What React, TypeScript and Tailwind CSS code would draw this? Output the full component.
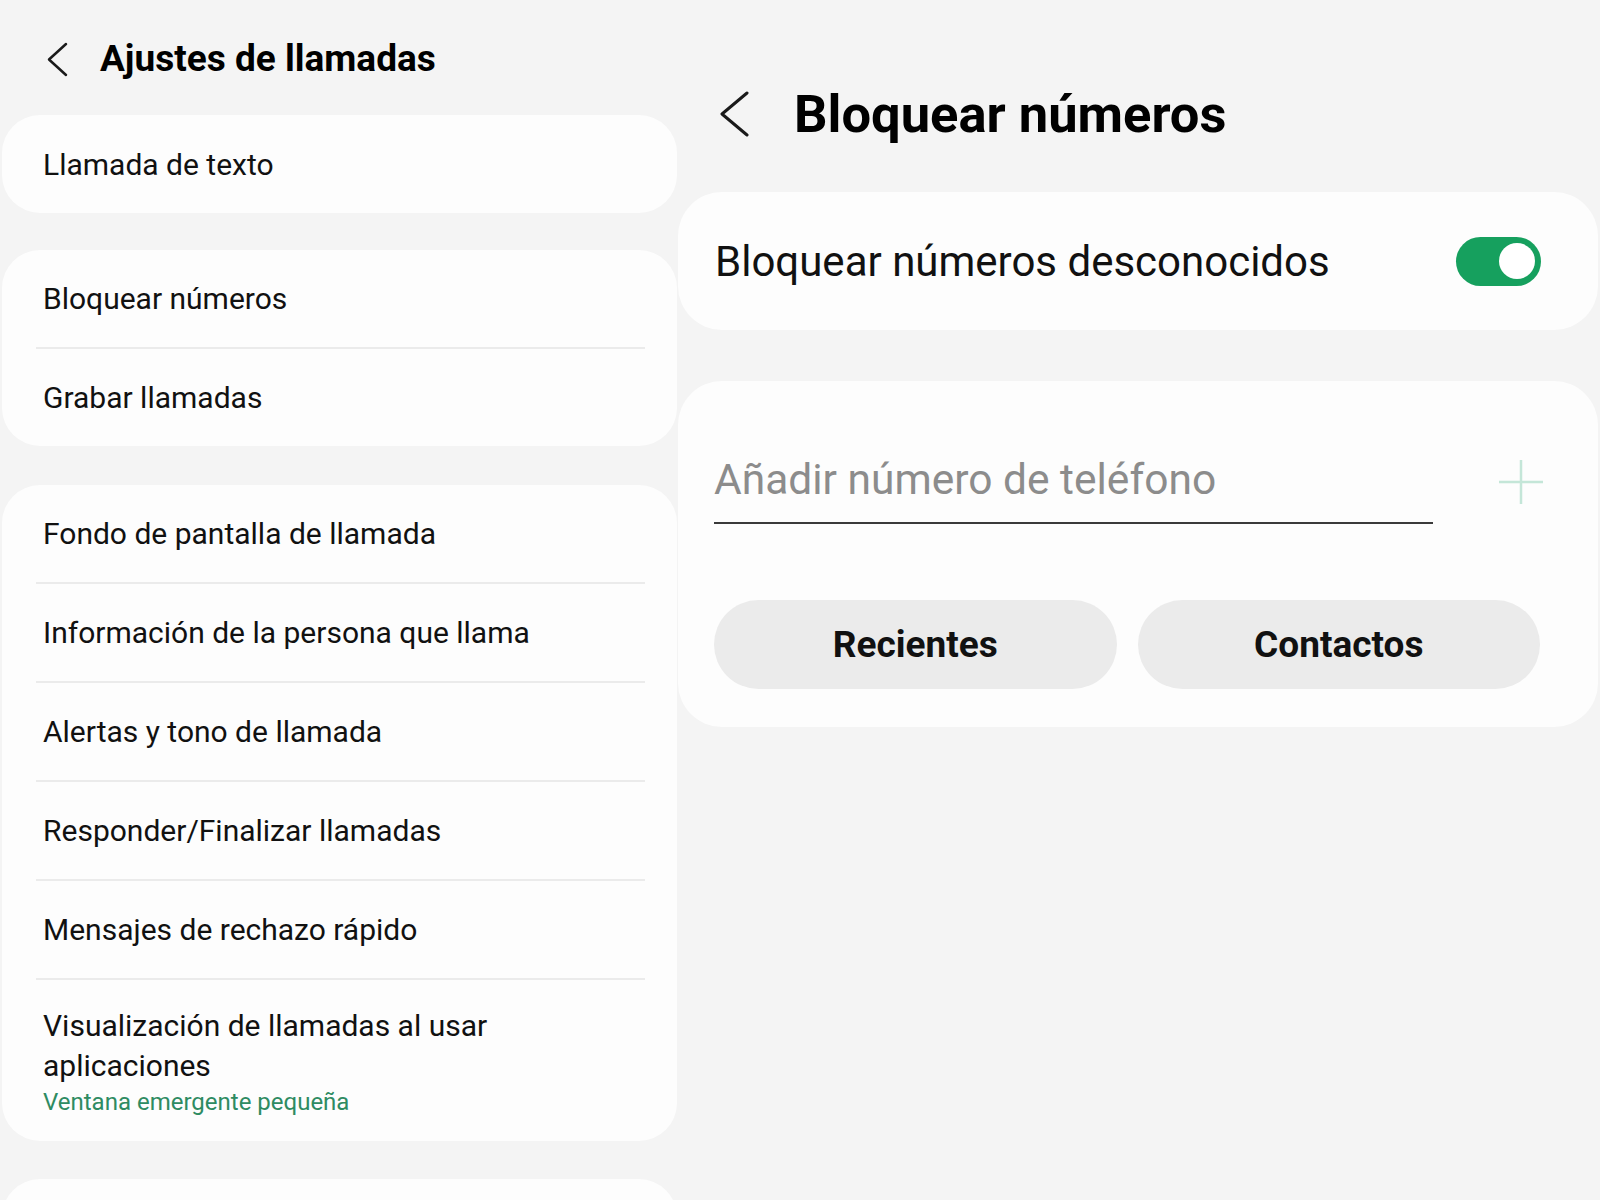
import React from 'react';

const font = { fontFamily: 'Roboto, "Noto Sans", sans-serif' };

function Chevron({ w, h, stroke }: { w: number; h: number; stroke: number }) {
  return (
    <svg width={w} height={h} viewBox={`0 0 ${w} ${h}`} fill="none">
      <polyline
        points={`${w - 2},2 3,${h / 2} ${w - 2},${h - 2}`}
        stroke="#1a1a1a"
        strokeWidth={stroke}
        strokeLinecap="round"
        strokeLinejoin="round"
      />
    </svg>
  );
}

function Divider() {
  return <div className="h-[2px] ml-[34px] mr-[32px] bg-[#ebebeb]" />;
}

function Row({ label }: { label: string }) {
  return (
    <div className="h-[97px] flex items-center pl-[41px] text-[30px] text-[#111]">{label}</div>
  );
}

const group3 = [
  'Fondo de pantalla de llamada',
  'Información de la persona que llama',
  'Alertas y tono de llamada',
  'Responder/Finalizar llamadas',
  'Mensajes de rechazo rápido',
];

export default function App() {
  return (
    <div className="w-[1600px] h-[1200px] overflow-hidden bg-[#f4f4f4] flex" style={font}>
      {/* left: Ajustes de llamadas */}
      <div className="w-[678px] shrink-0 pl-[2px] pr-[1px]">
        <div className="h-[115px] pt-[37px]">
          <div className="h-[44px] flex items-center">
            <div className="w-[98px] pl-[44px] flex items-center">
              <Chevron w={22} h={35} stroke={2.5} />
            </div>
            <h1 className="text-[37px] leading-[44px] font-bold text-black">Ajustes de llamadas</h1>
          </div>
        </div>

        <div className="rounded-[38px] bg-[#fdfdfd]">
          <div className="h-[98px] flex items-center pl-[41px] text-[30px] text-[#111]">Llamada de texto</div>
        </div>

        <div className="mt-[37px] rounded-[38px] bg-[#fdfdfd]">
          <Row label="Bloquear números" />
          <Divider />
          <Row label="Grabar llamadas" />
        </div>

        <div className="mt-[39px] rounded-[38px] bg-[#fdfdfd]">
          {group3.map((label) => (
            <React.Fragment key={label}>
              <Row label={label} />
              <Divider />
            </React.Fragment>
          ))}
          <div className="pl-[41px] pt-[26px] pb-[23px]">
            <div className="max-w-[560px] text-[30px] leading-[40px] text-[#111]">
              Visualización de llamadas al usar aplicaciones
            </div>
            <div className="text-[24px] leading-[32px] text-[#2e8b62]">Ventana emergente pequeña</div>
          </div>
        </div>

        <div className="mt-[38px] h-[100px] rounded-[38px] bg-[#fdfdfd]" />
      </div>

      {/* right: Bloquear números */}
      <div className="flex-1 pr-[2px]">
        <div className="h-[192px] pt-[84px]">
          <div className="h-[60px] flex items-center">
            <div className="w-[116px] pl-[41px] flex items-center">
              <Chevron w={30} h={46} stroke={3} />
            </div>
            <h2 className="text-[52.5px] leading-[60px] font-bold text-black">Bloquear números</h2>
          </div>
        </div>

        <div className="h-[138px] rounded-[44px] bg-[#fdfdfd] flex items-center pl-[37px] pr-[57px]">
          <span className="text-[42px] text-[#111]">Bloquear números desconocidos</span>
          <div className="ml-auto relative w-[85px] h-[49px] rounded-full bg-[#16a05e]">
            <div className="absolute right-[6px] top-[6.5px] w-[36px] h-[36px] rounded-full bg-white" />
          </div>
        </div>

        <div className="mt-[51px] rounded-[44px] bg-[#fdfdfd] pl-[36px] pt-[75px] pb-[38px]">
          <div className="flex items-start">
            <div className="w-[719px] pb-[18px] border-b-2 border-[#3a3a3a]">
              <div className="text-[42.5px] leading-[48px] text-[#8c8c8c]">Añadir número de teléfono</div>
            </div>
            <svg className="ml-[65px] mt-[3px]" width="46" height="46" viewBox="0 0 46 46" fill="none">
              <line x1="23" y1="1" x2="23" y2="45" stroke="#c4e6d8" strokeWidth="2.5" />
              <line x1="1" y1="23" x2="45" y2="23" stroke="#c4e6d8" strokeWidth="2.5" />
            </svg>
          </div>
          <div className="mt-[76px] w-[826px] grid grid-cols-2 gap-[21px]">
            <button className="h-[89px] rounded-full bg-[#ebebeb] text-[37px] font-bold text-[#111]">Recientes</button>
            <button className="h-[89px] rounded-full bg-[#ebebeb] text-[37px] font-bold text-[#111]">Contactos</button>
          </div>
        </div>
      </div>
    </div>
  );
}
